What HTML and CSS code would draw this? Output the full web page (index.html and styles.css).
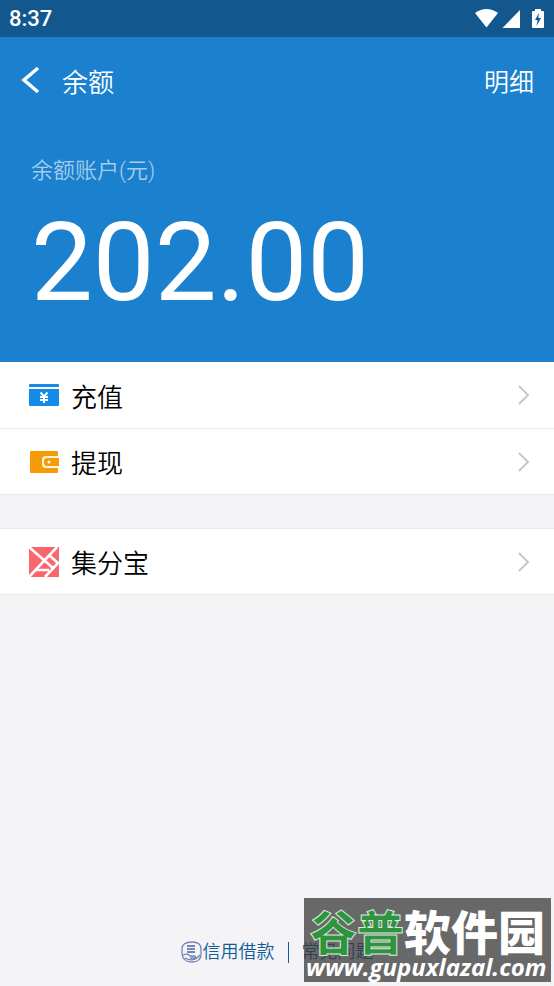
FILE: index.html
```html
<!DOCTYPE html>
<html lang="zh-CN">
<head>
<meta charset="utf-8">
<meta name="viewport" content="width=device-width, initial-scale=1">
<title>余额</title>
<link rel="stylesheet" href="styles.css">
</head>
<body>
<div class="status">
  <span>8:37</span>
  <svg class="status-icons" width="72" height="20" viewBox="0 0 72 20" fill="#fff" aria-hidden="true">
    <path d="M1 4Q12.500 -4 24 4L12.500 18.500Z"/>
    <path d="M46 1V19H28.500Z"/>
    <path fill-rule="evenodd" d="M61 0h6v2h2q1 0 1 1v15q0 1-1 1H59q-1 0-1-1V3q0-1 1-1h2ZM65 4L61 11h2.500l-1 6 4.500-8h-2.700Z"/>
  </svg>
</div>
<header class="hero">
  <nav class="bar">
    <button class="back" type="button" aria-label="返回">
      <svg width="20" height="28" viewBox="0 0 20 28" fill="none" stroke="#fff" stroke-width="3.500" aria-hidden="true"><path d="M18 2L4 14l14 12"/></svg>
    </button>
    <h1 class="title">余额</h1>
    <a class="detail" href="#detail">明细</a>
  </nav>
  <p class="label">余额账户(元)</p>
  <p class="amount">202.00</p>
</header>
<main class="content">
  <section class="group">
    <a class="row" href="#recharge">
      <svg class="icon" width="30" height="30" viewBox="0 0 30 30" aria-hidden="true">
        <path fill="#148be8" d="M0 5q0-1 1-1h28q1 0 1 1v2H0zM0 9h30v16q0 1-1 1H1q-1 0-1-1z"/>
        <path fill="none" stroke="#fff" stroke-width="2" d="M11.500 12.500l3.500 4 3.500-4M11 17h8M11 20h8M15 16v7"/>
      </svg>
      <span class="name">充值</span>
      <svg class="chevron" width="12" height="20" viewBox="0 0 12 20" aria-hidden="true"><path d="M1 1l9 9-9 9"/></svg>
    </a>
    <a class="row" href="#withdraw">
      <svg class="icon" width="30" height="30" viewBox="0 0 30 30" aria-hidden="true">
        <path fill="#f59b05" d="M1 5q0-1 1-1h26q1 0 1 1v20q0 1-1 1H2q-1 0-1-1z"/>
        <path fill="#fff6dc" d="M30 9H17q-4 0-4 4v4q0 4 4 4h13z"/>
        <path fill="#f59b05" d="M30 11H18q-3 0-3 3v2q0 3 3 3h12z"/>
        <circle cx="20" cy="15" r="1.500" fill="#fff"/>
      </svg>
      <span class="name">提现</span>
      <svg class="chevron" width="12" height="20" viewBox="0 0 12 20" aria-hidden="true"><path d="M1 1l9 9-9 9"/></svg>
    </a>
  </section>
  <section class="group">
    <a class="row" href="#points">
      <svg class="icon" width="30" height="30" viewBox="0 0 30 30" aria-hidden="true">
        <path fill="#f9666b" d="M0 0h30v30H0z"/>
        <path fill="none" stroke="#fff" stroke-width="2.600" d="M0 0L24 21M0 30L28 0M20 8l10 9M30 15L16 30M7 23h13"/>
      </svg>
      <span class="name">集分宝</span>
      <svg class="chevron" width="12" height="20" viewBox="0 0 12 20" aria-hidden="true"><path d="M1 1l9 9-9 9"/></svg>
    </a>
  </section>
</main>
<footer class="footer">
  <a class="link" href="#loan">
    <svg width="22" height="22" viewBox="0 0 22 22" fill="none" stroke="#7187b4" stroke-width="1.300" aria-hidden="true">
      <path d="M11 1q9 0 9 7v5q0 8-9 8T1 13V8q0-7 10-7Z"/>
      <path stroke-width="2.200" d="M6 5h8M6 8h8M6 11h8"/>
      <path d="M2 14q5-2 7 1h5q2 1-1 2H9M4 17q8 5 15-3"/>
    </svg>
    <span>信用借款</span>
  </a>
  <span class="divider"></span>
  <a class="link" href="#faq">常见问题</a>
</footer>
<aside class="watermark">
  <div class="brand"><span class="green">谷普</span><span>软件园</span></div>
  <div class="site">www.gupuxlazal.com</div>
</aside>
</body>
</html>
```

FILE: styles.css
```css
* { box-sizing: border-box; }

body {
  margin: 0;
  min-height: 100vh;
  display: flex;
  flex-direction: column;
  position: relative;
  background: #f4f4f7;
  color: #000;
  font-family: Roboto, "Noto Sans CJK SC", sans-serif;
  font-weight: 350;
}

h1, p { margin: 0; font-weight: inherit; }
a { color: inherit; text-decoration: none; }

.status {
  display: flex;
  align-items: center;
  justify-content: space-between;
  height: 37px;
  padding: 0 8px 0 9px;
  background: #12588f;
  color: #fff;
  font-size: 22px;
  font-weight: 500;
}

.hero {
  padding-bottom: 35px;
  background: #1b81cf;
  color: #fff;
}

.bar {
  display: flex;
  align-items: center;
  height: 86px;
  padding: 0 20px;
}

.back {
  display: flex;
  margin-right: 22px;
  padding: 0;
  border: 0;
  background: none;
}

.title { font-size: 26px; }
.detail { margin-left: auto; font-size: 25px; }

.label {
  padding: 32px 31px 0;
  color: #a4cdee;
  font-size: 22px;
  line-height: 32px;
}

.amount {
  padding: 11px 31px 0;
  font-size: 110px;
  font-weight: 400;
  line-height: 129px;
}

.content { flex: 1; }

.group {
  margin-bottom: 33px;
  background: #fff;
  border-bottom: 1px solid #ebebed;
}

.group + .group { border-top: 1px solid #ebebed; }

.row {
  display: flex;
  align-items: center;
  height: 65px;
  padding: 0 24px 0 29px;
  font-size: 26px;
}

.row:first-child:not(:last-child) { height: 67px; border-bottom: 1px solid #e8e8ea; }
.row:last-child { height: 65px; }
.name { margin-left: 12px; }

.chevron {
  margin-left: auto;
  fill: none;
  stroke: #c8c8cb;
  stroke-width: 2;
}

.footer {
  display: flex;
  align-items: center;
  justify-content: center;
  gap: 13px;
  padding-bottom: 19px;
  color: #135a99;
  font-size: 18px;
  line-height: 30px;
}

.link { display: flex; align-items: center; }
.divider { width: 1px; height: 21px; background: #135a99; }

.watermark {
  position: absolute;
  right: 3px;
  bottom: 4px;
  height: 84px;
  padding: 8px 2px 0;
  background: rgba(58, 58, 58, 0.75);
  color: #fff;
  white-space: nowrap;
}

.brand {
  padding: 0 4px;
  font-family: "Noto Sans CJK SC", sans-serif;
  font-size: 47px;
  font-weight: 900;
  line-height: 48px;
}

.green {
  color: #2f9440;
  -webkit-text-stroke: 1px #d5ead6;
}

.site {
  font-family: "Open Sans", sans-serif;
  font-size: 24px;
  font-style: italic;
  font-weight: 700;
  line-height: 25px;
}
```
